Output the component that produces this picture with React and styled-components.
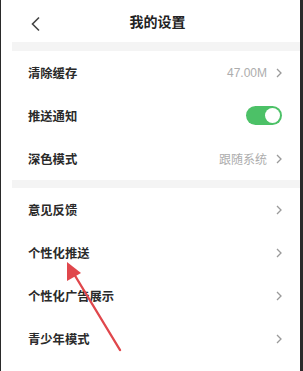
import styled, { createGlobalStyle } from 'styled-components';

const GlobalStyle = createGlobalStyle`
  html, body {
    margin: 0;
    padding: 0;
    background: #fff;
  }
  body {
    font-family: "Noto Sans CJK SC", "Noto Sans", sans-serif;
  }
`;

const Frame = styled.div`
  position: relative;
  box-sizing: border-box;
  width: 303px;
  height: 371px;
  border-left: 1px solid #2a2a2a;
  border-right: 3px solid #2a2a2a;
  background: #fff;
  overflow: hidden;
`;

const Header = styled.div`
  position: relative;
  height: 42px;
  display: flex;
  align-items: center;
  justify-content: center;
`;

const BackButton = styled.div`
  position: absolute;
  left: 29px;
  top: 13px;
  width: 12px;
  height: 16px;
`;

const Title = styled.div`
  font-size: 14px;
  font-weight: 600;
  color: #222;
  margin-left: 14px;
`;

const Divider = styled.div`
  height: ${p => p.$h || 9}px;
  margin-left: 11px;
  background: #f4f4f4;
`;

const Row = styled.div`
  height: 43px;
  display: flex;
  align-items: center;
  padding: 0 18px 0 27px;
`;

const Label = styled.div`
  flex: 1;
  font-size: 12.3px;
  font-weight: 600;
  color: #2a2a2a;
`;

const Value = styled.div`
  font-size: 12px;
  color: #adadad;
  margin-right: 9px;
  font-family: ${p => (p.$latin ? '"Liberation Sans", sans-serif' : 'inherit')};
`;

const Toggle = styled.div`
  width: 36px;
  height: 19px;
  border-radius: 10px;
  background: #4cc167;
  display: flex;
  align-items: center;
  justify-content: flex-end;
  padding-right: 2px;
  box-sizing: border-box;
`;

const Knob = styled.div`
  width: 15px;
  height: 15px;
  border-radius: 50%;
  background: #fff;
`;

const Chevron = () => (
  <svg width="6" height="10" viewBox="0 0 6 10">
    <path d="M1 1 L5 5 L1 9" fill="none" stroke="#9a9a9a" strokeWidth="1.3" />
  </svg>
);

const Arrow = styled.svg`
  position: absolute;
  left: 0;
  top: 0;
  pointer-events: none;
`;

const groups = [
  [
    { label: '清除缓存', value: '47.00M', latin: true },
    { label: '推送通知', toggle: true },
    { label: '深色模式', value: '跟随系统' },
  ],
  [
    { label: '意见反馈' },
    { label: '个性化推送' },
    { label: '个性化广告展示' },
    { label: '青少年模式' },
  ],
];

const App = () => (
  <>
    <GlobalStyle />
    <Frame>
      <Header>
        <BackButton>
          <svg width="12" height="16" viewBox="0 0 12 16">
            <path d="M9 1.5 L2.5 8 L9 14.5" fill="none" stroke="#444" strokeWidth="1.6" />
          </svg>
        </BackButton>
        <Title>我的设置</Title>
      </Header>
      {groups.map((items, gi) => (
        <div key={gi}>
          <Divider $h={gi === 0 ? 9 : 8} />
          {items.map(item => (
            <Row key={item.label}>
              <Label>{item.label}</Label>
              {item.value && <Value $latin={item.latin}>{item.value}</Value>}
              {item.toggle ? (
                <Toggle>
                  <Knob />
                </Toggle>
              ) : (
                <Chevron />
              )}
            </Row>
          ))}
        </div>
      ))}
      <Arrow width="303" height="371" viewBox="0 0 303 371">
        <line x1="119" y1="350" x2="73" y2="274" stroke="#e0474c" strokeWidth="2.4" strokeLinecap="round" />
        <polygon points="66,262 66,281 80,273" fill="#e0474c" />
      </Arrow>
    </Frame>
  </>
);

export default App;
